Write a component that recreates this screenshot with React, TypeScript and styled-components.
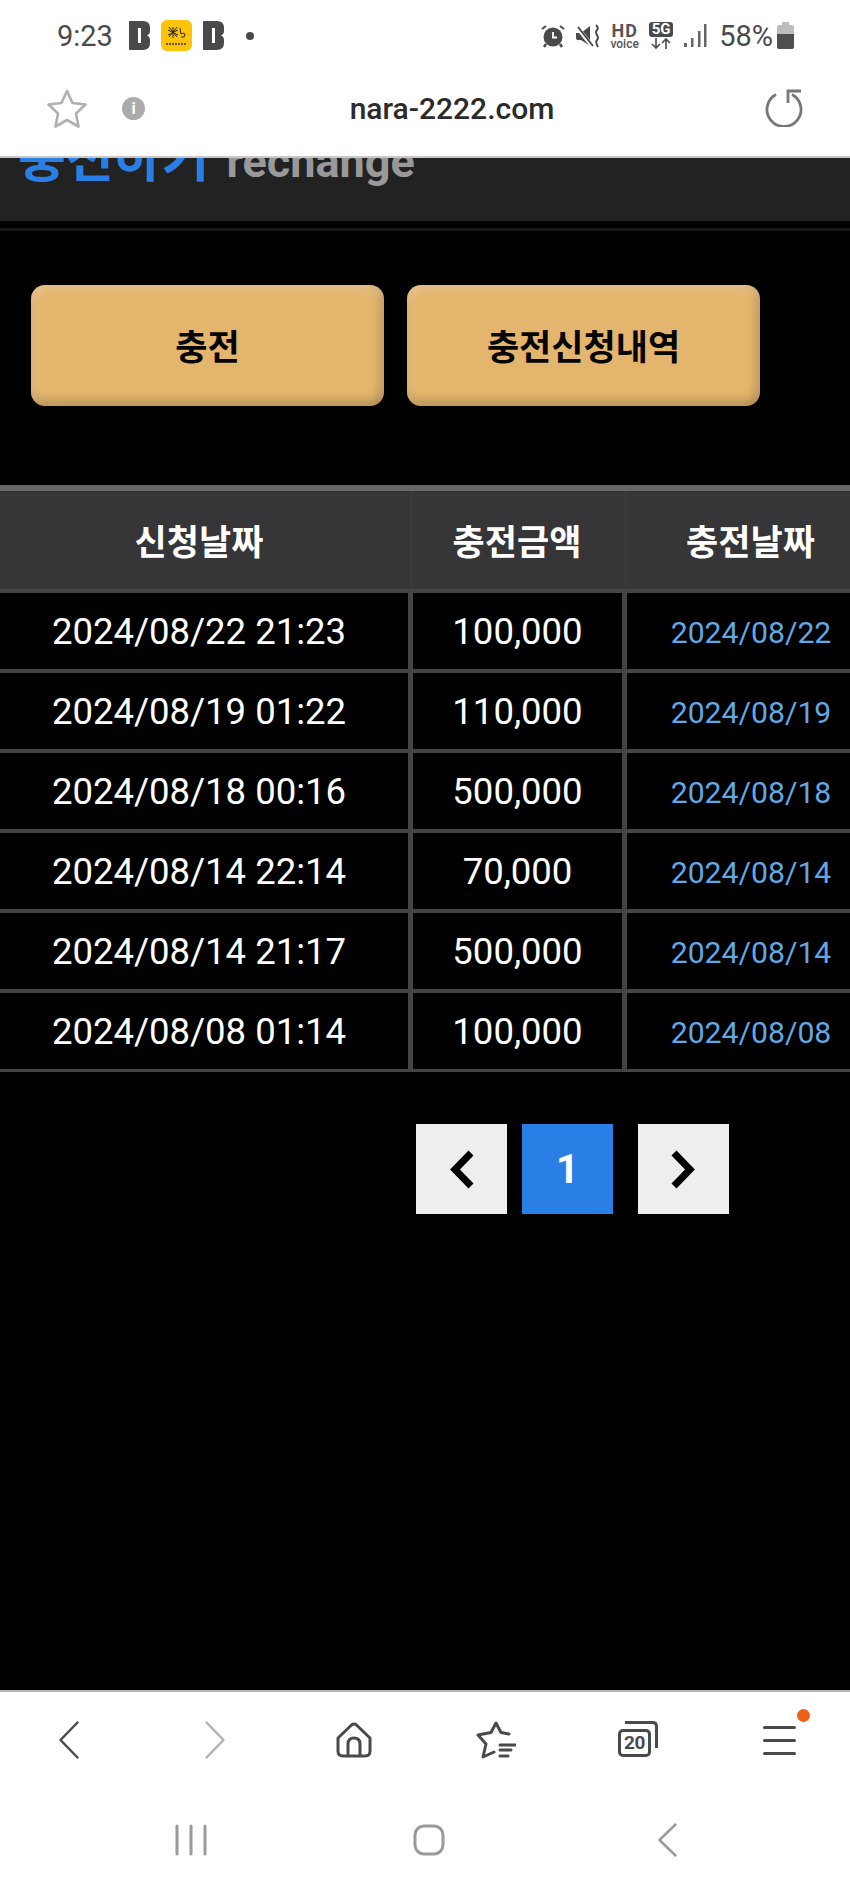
import React from 'react';
import styled, { createGlobalStyle } from 'styled-components';

const sans = `Roboto, "Noto Sans CJK KR", sans-serif`;
const hangul = `"Noto Sans CJK KR", Roboto, sans-serif`;

const GlobalStyle = createGlobalStyle`
  html, body {
    margin: 0;
    padding: 0;
    background: #000;
    overflow: hidden;
  }
  * {
    box-sizing: border-box;
  }
`;

const Screen = styled('div')`
  width: 850px;
  height: 1889px;
  display: flex;
  flex-direction: column;
  overflow: hidden;
  background: #000;
  font-family: ${sans};
`;

/* status bar */
const StatusBar = styled('div')`
  height: 70px;
  flex: none;
  background: #fff;
  display: flex;
  align-items: center;
  justify-content: space-between;
  padding: 1px 56px 0 57px;
  color: #4a4a4a;
`;

const StatusGroup = styled('div')`
  display: flex;
  align-items: center;
  gap: 11px;
`;

const Clock = styled('span')`
  font-size: 29px;
  line-height: 30px;
  margin-right: 5px;
`;

const Dot = styled('span')`
  width: 8px;
  height: 8px;
  border-radius: 50%;
  background: #4a4a4a;
  margin-left: 11px;
`;

const AppBadge = styled('svg')`
  display: block;
  flex: none;
`;

const VoiceBadge = styled('span')`
  display: flex;
  flex-direction: column;
  align-items: center;
  width: 27px;
  font-weight: 700;
  font-size: 18px;
  line-height: 16px;
  letter-spacing: 1px;
  color: #555;
  small {
    font-size: 12px;
    font-weight: 500;
    line-height: 10px;
    letter-spacing: 0;
  }
`;

const NetBadge = styled('span')`
  display: flex;
  flex-direction: column;
  align-items: center;
  width: 24px;
  b {
    display: block;
    width: 24px;
    height: 15px;
    background: #4a4a4a;
    border-radius: 3px;
    color: #fff;
    font-size: 15px;
    line-height: 15px;
    text-align: center;
  }
  svg {
    display: block;
    margin-top: 1px;
  }
`;

const Percent = styled('span')`
  font-size: 29px;
  line-height: 30px;
  margin-left: 1px;
  margin-right: -7px;
`;

/* url bar */
const UrlBar = styled('div')`
  height: 88px;
  flex: none;
  background: #fff;
  border-bottom: 2px solid #c8c8c8;
  display: grid;
  grid-template-columns: 190px 430px 136px;
  align-items: center;
  padding: 0 47px 10px;
`;

const UrlLeft = styled('div')`
  display: flex;
  align-items: center;
  gap: 35px;
`;

const InfoDot = styled('span')`
  width: 23px;
  height: 23px;
  border-radius: 50%;
  background: #ababab;
  color: #fff;
  font-size: 16px;
  font-weight: 700;
  line-height: 23px;
  text-align: center;
`;

const UrlText = styled('div')`
  font-size: 30px;
  font-weight: 500;
  color: #2b2b2b;
  text-align: center;
  white-space: nowrap;
`;

const UrlRight = styled('div')`
  display: flex;
  justify-content: flex-end;
`;

/* page */
const Main = styled('main')`
  flex: 1;
  min-height: 0;
  background: #000;
  overflow: hidden;
`;

const TitleBand = styled('div')`
  height: 63px;
  background: #222;
  overflow: hidden;
  padding-left: 18px;
  white-space: nowrap;
`;

const TitleInner = styled('h1')`
  margin: -35px 0 0;
  font-size: 45px;
  line-height: 64px;
  font-weight: 700;
  color: #999;
`;

const TitleBlue = styled('span')`
  font-family: ${hangul};
  font-size: 52px;
  color: #2a7fe6;
  margin-right: 17px;
`;

const TitleRule = styled('div')`
  height: 3px;
  margin-top: 7px;
  background: #1a1a1a;
`;

const ButtonRow = styled('div')`
  display: flex;
  gap: 23px;
  padding: 54px 0 0 31px;
`;

const ActionButton = styled('button')`
  width: 353px;
  height: 121px;
  padding: 0 0 3px;
  border: 0;
  border-radius: 14px;
  background: #e4b56d;
  box-shadow:
    inset 0 7px 8px rgba(255, 255, 255, 0.16),
    inset 6px 0 8px rgba(255, 255, 255, 0.08),
    inset -6px 0 8px rgba(0, 0, 0, 0.1),
    inset 0 -7px 8px rgba(0, 0, 0, 0.14);
  color: #050505;
  font-family: ${hangul};
  font-size: 35px;
  font-weight: 700;
`;

const Table = styled('div')`
  width: 885px;
  margin: 79px 0 0 -10px;
  border-bottom: 3px solid #444;
`;

const HeadRow = styled('div')`
  display: grid;
  grid-template-columns: 418px 214px 253px;
  height: 104px;
  border-top: 6px solid #666;
  background: #363537;
`;

const HeadCell = styled('div')`
  display: flex;
  align-items: center;
  justify-content: center;
  padding-bottom: 2px;
  font-family: ${hangul};
  font-size: 35px;
  font-weight: 700;
  color: #fff;
  border-left: ${p => (p.$first ? '0' : '1px solid #3e3e3e')};
  margin-left: ${p => (p.$first ? '0' : '3px')};
`;

const Row = styled('div')`
  display: grid;
  grid-template-columns: 418px 214px 253px;
  height: 80px;
  border-top: 4px solid #444;
`;

const Cell = styled('div')`
  display: flex;
  align-items: center;
  justify-content: center;
  font-size: ${p => (p.$link ? 30.2 : 36.5)}px;
  color: ${p => (p.$link ? '#62a8e5' : '#fff')};
  border-left: ${p => (p.$first ? '0' : '5px solid #444')};
  padding-top: ${p => (p.$link ? 3 : 0)}px;
`;

const Pager = styled('nav')`
  display: flex;
  gap: 15px;
  padding: 52px 0 0 416px;
`;

const PageBox = styled('a')`
  width: 91px;
  height: 90px;
  display: flex;
  align-items: center;
  justify-content: center;
  background: ${p => (p.$active ? '#2a7fe6' : '#eeeef0')};
  color: #fff;
  font-size: 40px;
  font-weight: 700;
  margin-right: ${p => (p.$active ? 10 : 0)}px;
`;

/* browser toolbar */
const Toolbar = styled('div')`
  height: 100px;
  flex: none;
  background: #fff;
  border-top: 2px solid #b5b5b5;
  display: grid;
  grid-template-columns: repeat(6, 141.67px);
`;

const ToolItem = styled('div')`
  position: relative;
  display: flex;
  align-items: center;
  justify-content: center;
  padding: 0 ${p => (p.$nudge < 0 ? -p.$nudge * 2 : 0)}px 2px ${p => (p.$nudge > 0 ? p.$nudge * 2 : 0)}px;
`;

const TabCount = styled('span')`
  position: relative;
  width: 33px;
  height: 28px;
  margin: 6px 6px 0 0;
  border: 3px solid #4a4a4a;
  border-radius: 5px;
  color: #4a4a4a;
  font-size: 19px;
  font-weight: 700;
  line-height: 22px;
  text-align: center;
  letter-spacing: -0.5px;
  &::before {
    content: '';
    position: absolute;
    top: -11px;
    right: -10px;
    width: 30px;
    height: 24px;
    border: solid #4a4a4a;
    border-width: 3px 3px 0 0;
    border-radius: 0 5px 0 0;
  }
`;

const MenuLines = styled('div')`
  display: flex;
  flex-direction: column;
  gap: 10px;
  width: 33px;
  span {
    height: 3px;
    border-radius: 2px;
    background: #4a4a4a;
  }
`;

const NoticeDot = styled('span')`
  position: absolute;
  top: 17px;
  left: 89px;
  width: 13px;
  height: 13px;
  border-radius: 50%;
  background: #ec6118;
`;

const SystemNav = styled('div')`
  height: 99px;
  flex: none;
  background: #fff;
  display: grid;
  grid-template-columns: repeat(3, 238px);
  padding-left: 72px;
`;

const SystemItem = styled('div')`
  display: flex;
  align-items: center;
  justify-content: center;
`;

const BLogo = () => (
  <AppBadge width="21" height="29" viewBox="0 0 21 29">
    <path
      fill="#4a4a4a"
      d="M1 0h13q7 0 7 7v3q0 3-3 4.500q3 1 3 4.500v3q0 7-7 7H1q-1 0-1-1V1q0-1 1-1z"
    />
    <rect x="9" y="7" width="3" height="15" fill="#fff" />
  </AppBadge>
);

const YellowApp = () => (
  <AppBadge width="31" height="31" viewBox="0 0 31 31">
    <rect width="31" height="31" rx="6" fill="#fdc40a" />
    <g stroke="#222" strokeWidth="1" fill="none">
      <path d="M12 7v11M7 10l10 5M17 10l-10 5M8 7l8 10M16 7l-8 10" />
      <path d="M19 8l1 6q4-2 4 1t-4 2" />
    </g>
    <path d="M5 24h21" stroke="#6b5410" strokeWidth="2" strokeDasharray="2 1" />
  </AppBadge>
);

const Alarm = () => (
  <svg width="24" height="24" viewBox="0 0 24 24">
    <circle cx="12" cy="13" r="9.500" fill="#4a4a4a" />
    <path d="M12 8v5.500h4" stroke="#fff" strokeWidth="1.800" fill="none" />
    <path d="M1 5l4-3M23 5l-4-3" stroke="#4a4a4a" strokeWidth="2" />
    <path d="M5 20l-2 3M19 20l2 3" stroke="#4a4a4a" strokeWidth="2.500" />
  </svg>
);

const Mute = () => (
  <svg width="24" height="24" viewBox="0 0 24 24">
    <path fill="#4a4a4a" d="M0 9h5l9-7v20l-9-6H2q-2 0-2-2z" />
    <path d="M1 3l15 19" stroke="#fff" strokeWidth="4" />
    <path d="M2 3l15 19" stroke="#4a4a4a" strokeWidth="2" />
    <path d="M20 1q3 3 1 5t0 5t0 5t1 7" stroke="#4a4a4a" strokeWidth="2" fill="none" />
  </svg>
);

const Signal = () => (
  <svg width="23" height="24" viewBox="0 0 23 24">
    <rect x="0" y="19" width="3" height="4" fill="#666" />
    <rect x="7" y="14" width="2.500" height="9" fill="#666" />
    <rect x="14" y="7" width="2.500" height="16" fill="#666" />
    <rect x="20" y="0" width="2.500" height="23" fill="#666" />
  </svg>
);

const Battery = () => (
  <svg width="17" height="27" viewBox="0 0 17 27">
    <path fill="#bdbdbd" d="M5 0h7v3h3q2 0 2 2v9H0V5q0-2 2-2h3z" />
    <path fill="#4f4f4f" d="M0 12h17v13q0 2-2 2H2q-2 0-2-2z" />
  </svg>
);

const Arrows = () => (
  <svg width="20" height="11" viewBox="0 0 20 11" fill="none" stroke="#4a4a4a" strokeWidth="1.600">
    <path d="M5 0v10M1 6l4 4 4-4M15 11V1M11 5l4-4 4 4" />
  </svg>
);

const StarOutline = () => (
  <svg width="40" height="39" viewBox="0 0 40 39" fill="none" stroke="#b0b0b0" strokeWidth="2.600" strokeLinejoin="round">
    <path d="M20 2l5.500 12 13 1.500-9.500 9 2.500 13-11.500-6.500-11.500 6.500 2.500-13-9.500-9 13-1.500z" />
  </svg>
);

const Reload = () => (
  <svg width="38" height="38" viewBox="0 0 38 38" fill="none" stroke="#777" strokeWidth="2.800">
    <path d="M11 5.500a17 17 0 1 0 16 0" />
    <path d="M36 2H23v12" />
  </svg>
);

const Chevron = ({ dir, color, width, height, stroke }: { dir: 'left' | 'right'; color: string; width: number; height: number; stroke: number }) => (
  <svg width={width} height={height} viewBox={`0 0 ${width} ${height}`} fill="none" stroke={color} strokeWidth={stroke} strokeLinecap="round" strokeLinejoin="round">
    {dir === 'left'
      ? <path d={`M${width - stroke} ${stroke}L${stroke} ${height / 2}L${width - stroke} ${height - stroke}`} />
      : <path d={`M${stroke} ${stroke}L${width - stroke} ${height / 2}L${stroke} ${height - stroke}`} />}
  </svg>
);

const PageChevron = ({ dir }: { dir: 'left' | 'right' }) => (
  <svg width="25" height="39" viewBox="0 0 25 39" fill="none" stroke="#000" strokeWidth="7" strokeLinejoin="miter">
    {dir === 'left' ? <path d="M22 3L6 19.500L22 36" /> : <path d="M3 3L19 19.500L3 36" />}
  </svg>
);

const Home = () => (
  <svg width="36" height="36" viewBox="0 0 36 36" fill="none" stroke="#4a4a4a" strokeWidth="3" strokeLinejoin="round">
    <path d="M2 16L15.500 3q2.500-2 5 0L34 16v13q0 5-5 5H7q-5 0-5-5z" />
    <path d="M12 34V22q0-6 6-6t6 6v12" />
  </svg>
);

const StarList = () => (
  <svg width="40" height="38" viewBox="0 0 40 38" fill="none" stroke="#4a4a4a" strokeWidth="3" strokeLinejoin="round" strokeLinecap="round">
    <path d="M33 13l-8-1.500L20 2l-5 9.500L2 14l8 9-3 13 11-5" />
    <path d="M24 24h15M24 29h11M24 35h8" />
  </svg>
);

const rows = [
  ['2024/08/22 21:23', '100,000', '2024/08/22'],
  ['2024/08/19 01:22', '110,000', '2024/08/19'],
  ['2024/08/18 00:16', '500,000', '2024/08/18'],
  ['2024/08/14 22:14', '70,000', '2024/08/14'],
  ['2024/08/14 21:17', '500,000', '2024/08/14'],
  ['2024/08/08 01:14', '100,000', '2024/08/08'],
];

function App() {
  return (
    <Screen>
      <GlobalStyle />
      <StatusBar>
        <StatusGroup>
          <Clock>9:23</Clock>
          <BLogo />
          <YellowApp />
          <BLogo />
          <Dot />
        </StatusGroup>
        <StatusGroup>
          <Alarm />
          <Mute />
          <VoiceBadge>HD<small>voice</small></VoiceBadge>
          <NetBadge><b>5G</b><Arrows /></NetBadge>
          <Signal />
          <Percent>58%</Percent>
          <Battery />
        </StatusGroup>
      </StatusBar>

      <UrlBar>
        <UrlLeft>
          <StarOutline />
          <InfoDot>i</InfoDot>
        </UrlLeft>
        <UrlText>nara-2222.com</UrlText>
        <UrlRight>
          <Reload />
        </UrlRight>
      </UrlBar>

      <Main>
        <TitleBand>
          <TitleInner><TitleBlue>충전하기</TitleBlue>rechange</TitleInner>
        </TitleBand>
        <TitleRule />

        <ButtonRow>
          <ActionButton>충전</ActionButton>
          <ActionButton>충전신청내역</ActionButton>
        </ButtonRow>

        <Table>
          <HeadRow>
            <HeadCell $first>신청날짜</HeadCell>
            <HeadCell>충전금액</HeadCell>
            <HeadCell>충전날짜</HeadCell>
          </HeadRow>
          {rows.map(([requested, amount, charged]) => (
            <Row key={requested}>
              <Cell $first>{requested}</Cell>
              <Cell>{amount}</Cell>
              <Cell $link>{charged}</Cell>
            </Row>
          ))}
        </Table>

        <Pager>
          <PageBox><PageChevron dir="left" /></PageBox>
          <PageBox $active>1</PageBox>
          <PageBox><PageChevron dir="right" /></PageBox>
        </Pager>
      </Main>

      <Toolbar>
        <ToolItem $nudge={-2}><Chevron dir="left" color="#4a4a4a" width={22} height={40} stroke={2.5} /></ToolItem>
        <ToolItem $nudge={3}><Chevron dir="right" color="#b2b2b2" width={22} height={40} stroke={2.5} /></ToolItem>
        <ToolItem><Home /></ToolItem>
        <ToolItem><StarList /></ToolItem>
        <ToolItem><TabCount>20</TabCount></ToolItem>
        <ToolItem>
          <MenuLines><span /><span /><span /></MenuLines>
          <NoticeDot />
        </ToolItem>
      </Toolbar>

      <SystemNav>
        <SystemItem>
          <svg width="32" height="32" viewBox="0 0 32 32" stroke="#9a9a9a" strokeWidth="3" strokeLinecap="round">
            <path d="M2 2v28M16 2v28M30 2v28" />
          </svg>
        </SystemItem>
        <SystemItem>
          <svg width="32" height="32" viewBox="0 0 32 32" fill="none" stroke="#9a9a9a" strokeWidth="3">
            <rect x="2" y="2" width="28" height="28" rx="9" />
          </svg>
        </SystemItem>
        <SystemItem><Chevron dir="left" color="#9a9a9a" width={21} height={36} stroke={2.5} /></SystemItem>
      </SystemNav>
    </Screen>
  );
}

export default App;
